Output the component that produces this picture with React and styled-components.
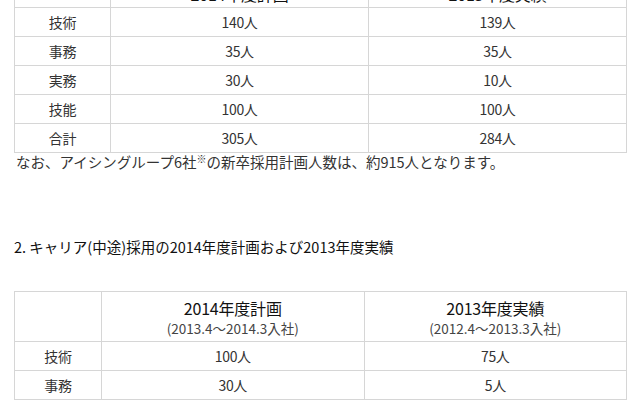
import React from "react";
import styled, { createGlobalStyle } from "styled-components";

const GlobalStyle = createGlobalStyle`
  html, body {
    margin: 0;
    padding: 0;
    background: #ffffff;
    overflow: hidden;
  }
  body {
    font-family: "Noto Sans CJK JP", "Noto Sans", sans-serif;
    color: #333333;
  }
`;

const Page = styled.div`
  width: 640px;
  height: 400px;
  overflow: hidden;
  padding-left: 14px;
  box-sizing: border-box;
`;

const Table = styled.table`
  width: 613px;
  border-collapse: collapse;
  table-layout: fixed;
  margin-top: ${(p) => p.$top || 0}px;
`;

const Cell = styled.td`
  border: 1px solid #d6d6d6;
  text-align: center;
  padding: 0;
  height: 28px;
  font-size: 14px;
  line-height: 28px;
  color: #333333;
  letter-spacing: -0.3px;
`;

const HeadCell = styled.th`
  border: 1px solid #d6d6d6;
  text-align: center;
  padding: 0 0 ${(p) => p.$pb ?? 4}px;
  height: ${(p) => p.$h || 45}px;
  vertical-align: bottom;
  font-weight: normal;
`;

const HeadTitle = styled.div`
  font-size: 16px;
  line-height: 22px;
  color: #111111;
  letter-spacing: -0.2px;
`;

const HeadSub = styled.div`
  font-size: 13.5px;
  line-height: 18px;
  color: #444444;
  letter-spacing: 0;
`;

const Note = styled.p`
  margin: 0;
  padding: 0 0 0 2px;
  font-size: 14.5px;
  line-height: 18px;
  color: #333333;
  letter-spacing: 0;
`;

const Sup = styled.sup`
  font-size: 10px;
  line-height: 0;
  vertical-align: 5px;
`;

const Heading = styled.h3`
  margin: 66px 0 0 0;
  font-size: 14.5px;
  line-height: 20px;
  font-weight: normal;
  color: #111111;
  letter-spacing: 0;
`;

const firstRows = [
  ["技術", "140人", "139人"],
  ["事務", "35人", "35人"],
  ["実務", "30人", "10人"],
  ["技能", "100人", "100人"],
  ["合計", "305人", "284人"],
];

const secondRows = [
  ["技術", "100人", "75人"],
  ["事務", "30人", "5人"],
];

const Cols = ({ first }) => (
  <colgroup>
    <col style={{ width: first }} />
    <col />
    <col />
  </colgroup>
);

export default function App() {
  return (
    <Page>
      <GlobalStyle />
      <Table $top={-26}>
        <Cols first={96} />
        <thead>
          <tr>
            <HeadCell $h={30} $pb={2} />
            <HeadCell $h={30} $pb={2}>
              <HeadTitle>2014年度計画</HeadTitle>
            </HeadCell>
            <HeadCell $h={30} $pb={2}>
              <HeadTitle>2013年度実績</HeadTitle>
            </HeadCell>
          </tr>
        </thead>
        <tbody>
          {firstRows.map((r) => (
            <tr key={r[0]}>
              <Cell>{r[0]}</Cell>
              <Cell>{r[1]}</Cell>
              <Cell>{r[2]}</Cell>
            </tr>
          ))}
        </tbody>
      </Table>
      <Note>
        なお、アイシングループ6社<Sup>※</Sup>の新卒採用計画人数は、約915人となります。
      </Note>
      <Heading>2. キャリア(中途)採用の2014年度計画および2013年度実績</Heading>
      <Table $top={34}>
        <Cols first={87} />
        <thead>
          <tr>
            <HeadCell />
            <HeadCell>
              <HeadTitle>2014年度計画</HeadTitle>
              <HeadSub>(2013.4〜2014.3入社)</HeadSub>
            </HeadCell>
            <HeadCell>
              <HeadTitle>2013年度実績</HeadTitle>
              <HeadSub>(2012.4〜2013.3入社)</HeadSub>
            </HeadCell>
          </tr>
        </thead>
        <tbody>
          {secondRows.map((r) => (
            <tr key={r[0]}>
              <Cell>{r[0]}</Cell>
              <Cell>{r[1]}</Cell>
              <Cell>{r[2]}</Cell>
            </tr>
          ))}
        </tbody>
      </Table>
    </Page>
  );
}
